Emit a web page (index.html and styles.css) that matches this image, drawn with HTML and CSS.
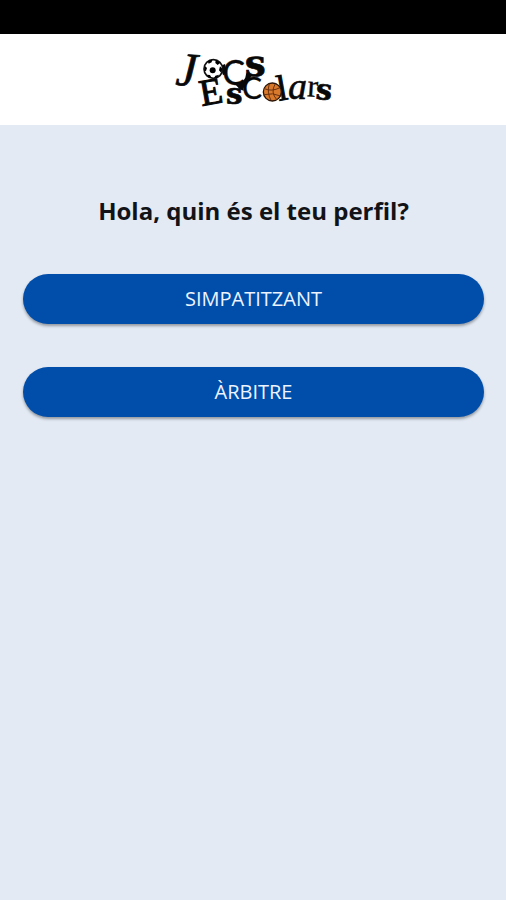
FILE: index.html
```
<!DOCTYPE html>
<html lang="ca">
<head>
<meta charset="utf-8">
<meta name="viewport" content="width=device-width, initial-scale=1">
<title>Jocs Escolars</title>
<link rel="stylesheet" href="styles.css">
</head>
<body>
<div class="status-bar"></div>
<header class="header">
<svg class="logo" viewBox="0 42 540 210" role="img" aria-label="Jocs Escolars">
  <g class="slab">
    <text transform="translate(36 164) rotate(4)" font-size="142" class="slant">J</text>
    <text x="178" y="165" font-size="102" class="arc">C</text>
    <text x="245" y="139" font-size="112" class="heavy">s</text>
    <text transform="translate(116 228) rotate(-10)" font-size="112" class="round">E</text>
    <text x="189" y="222" font-size="88" class="heavy">s</text>
    <text x="237" y="208" font-size="90" class="arc">C</text>
    <text transform="translate(348 212) rotate(-10)" font-size="108" class="round">l</text>
    <text x="376" y="208" font-size="112" class="slant">a</text>
    <text transform="translate(431 199) rotate(4)" font-size="96" class="thin">r</text>
    <text transform="translate(457 206) rotate(5)" font-size="86" class="heavy">s</text>
  </g>
  <path class="joint" d="M172 108l14-6 4 28-10 6zM218 164q16 2 30-22l12 2-10 20q-10 4-8 18l-12-4zM250 130l16 4-6 16-14-4z"/>
  <circle class="soccer" cx="151" cy="117" r="28"/>
  <circle cx="149" cy="121" r="9"/>
  <path d="M134 94l14-6-2 9-9 4zM158 89l14 9-8 7-7-6zM171 109l7 7-3 13-7-8zM126 108l6 6-3 9-5-1zM132 134l9 1 5 9-10-2zM157 137l11-3-6 9-9 2z"/>
  <circle class="basket" cx="328" cy="186" r="27"/>
  <path class="seam" d="M304 176q22 10 47-3M303 194q27-7 50 4M319 161q-8 26 5 50M337 161q-16 26 5 49"/>
</svg>
</header>
<main class="content">
<h1 class="title">Hola, quin és el teu perfil?</h1>
<div class="actions">
<button class="button" type="button">SIMPATITZANT</button>
<button class="button" type="button">ÀRBITRE</button>
</div>
</main>
</body>
</html>
```

FILE: styles.css
```
* { box-sizing: border-box; }
body {
  margin: 0;
  min-height: 100vh;
  background: #e3eaf4;
  color: #111317;
  font-family: "Open Sans", "Noto Sans", sans-serif;
}
.status-bar { height: 34px; background: #000; }
.header {
  display: flex;
  justify-content: center;
  padding: 10px 0 11px;
  background: #fff;
}
.logo { display: block; width: 180px; height: 70px; overflow: visible; }
.slab { font-family: "DejaVu Serif", serif; fill: #080808; stroke: #080808; stroke-width: 2; }
.round { font-family: "Liberation Serif", serif; stroke-width: 3; }
.arc { font-family: Lato, sans-serif; stroke-width: 1; }
.thin { font-family: "Liberation Serif", serif; stroke-width: 1; }
.heavy { font-weight: 700; }
.slant { font-family: "Liberation Serif", serif; font-style: italic; }
.joint { fill: #080808; }
.soccer { fill: #fff; stroke: #111; stroke-width: 5; }
.basket { fill: #d9792b; stroke: #291407; stroke-width: 4; }
.seam { fill: none; stroke: #6b3210; stroke-width: 3; }
.content { padding: 68px 22px 24px 23px; }
.title {
  margin: 0;
  font-size: 24px;
  line-height: 36px;
  font-weight: 700;
  text-align: center;
}
.actions { display: grid; gap: 43px; margin-top: 45px; }
.button {
  height: 50px;
  padding: 0 16px;
  border: 0;
  border-radius: 25px;
  background: #004eaa;
  box-shadow: 0 2px 3px rgba(0, 0, 0, 0.35);
  color: #edf4ff;
  font: 400 20px/28px "Open Sans", "Noto Sans", sans-serif;
  cursor: pointer;
}
```
